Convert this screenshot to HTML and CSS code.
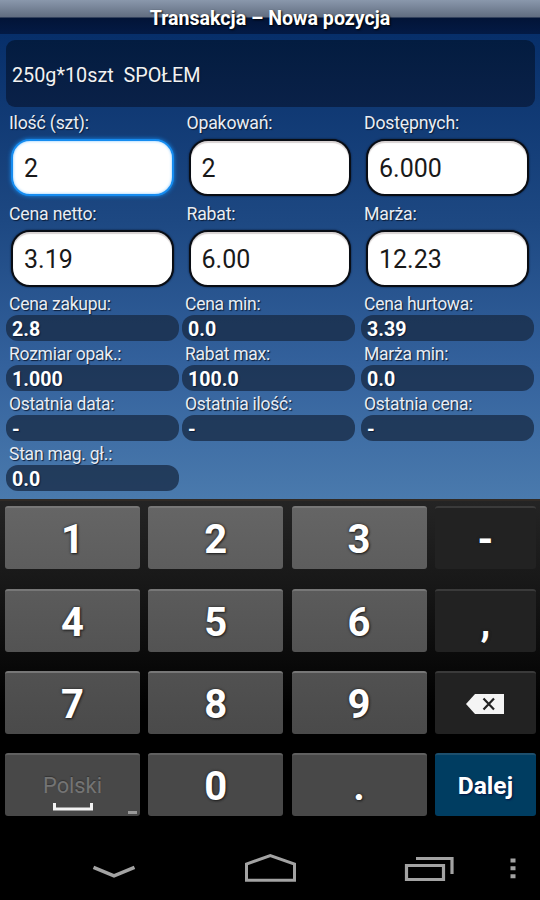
FILE: index.html
```html
<!DOCTYPE html>
<html lang="pl">
<head>
<meta charset="utf-8">
<title>Transakcja – Nowa pozycja</title>
<link rel="stylesheet" href="styles.css">
</head>
<body>
<main class="screen">
  <header class="title"><span>Transakcja – Nowa pozycja</span></header>
  <section class="form">
    <div class="product">250g*10szt&nbsp; SPOŁEM</div>
    <div class="inputs">
      <div class="field"><label>Ilość (szt):</label><div class="box focused">2</div></div>
      <div class="field"><label>Opakowań:</label><div class="box">2</div></div>
      <div class="field"><label>Dostępnych:</label><div class="box">6.000</div></div>
      <div class="field"><label>Cena netto:</label><div class="box">3.19</div></div>
      <div class="field"><label>Rabat:</label><div class="box">6.00</div></div>
      <div class="field"><label>Marża:</label><div class="box">12.23</div></div>
    </div>
    <div class="infos">
      <div class="info"><label>Cena zakupu:</label><div class="pill">2.8</div></div>
      <div class="info"><label>Cena min:</label><div class="pill">0.0</div></div>
      <div class="info"><label>Cena hurtowa:</label><div class="pill">3.39</div></div>
      <div class="info"><label>Rozmiar opak.:</label><div class="pill">1.000</div></div>
      <div class="info"><label>Rabat max:</label><div class="pill">100.0</div></div>
      <div class="info"><label>Marża min:</label><div class="pill">0.0</div></div>
      <div class="info"><label>Ostatnia data:</label><div class="pill">-</div></div>
      <div class="info"><label>Ostatnia ilość:</label><div class="pill">-</div></div>
      <div class="info"><label>Ostatnia cena:</label><div class="pill">-</div></div>
      <div class="info"><label>Stan mag. gł.:</label><div class="pill">0.0</div></div>
    </div>
  </section>
  <section class="keypad">
    <div class="key r1">1</div><div class="key r1">2</div><div class="key r1">3</div><div class="key dark">-</div>
    <div class="key r2">4</div><div class="key r2">5</div><div class="key r2">6</div><div class="key dark">,</div>
    <div class="key r3">7</div><div class="key r3">8</div><div class="key r3">9</div>
    <div class="key dark">
      <svg class="backspace" width="40" height="22" viewBox="0 0 40 22"><path d="M1 11 10 1H39V21H10Z" fill="#f4f4f4"/><path d="M18.5 5.5 29 16.5M29 5.5 18.5 16.5" stroke="#222" stroke-width="2.2"/></svg>
    </div>
    <div class="key r4 space"><span>Polski</span>
      <svg width="40" height="8" viewBox="0 0 40 8"><path d="M1.5 0V6H38.5V0" fill="none" stroke="#f2f2f2" stroke-width="3"/></svg>
      <i class="more"></i>
    </div>
    <div class="key r4">0</div><div class="key r4">.</div><div class="key enter">Dalej</div>
  </section>
  <nav class="navbar">
    <svg width="540" height="74" viewBox="0 826 540 74" fill="none" stroke="#a3a3a3">
      <path d="M93.5 867.3 114 875.8 134.500 867.3" stroke-width="3.6"/>
      <path d="M246.500 880.300V864L270.300 855.500 294.500 864V880.300Z" stroke-width="3"/>
      <path d="M406.500 865.500H443.500V879.500H406.500ZM416 858.500H452V874" stroke-width="3.200"/>
      <path d="M510.500 858.500h5v4h-5zM510.500 866.300h5v4h-5zM510.500 874.200h5v4h-5z" fill="#a3a3a3" stroke="none"/>
    </svg>
  </nav>
</main>
</body>
</html>
```
FILE: styles.css
```css
* { box-sizing: border-box; }
body { margin: 0; background: #000; font-family: Roboto, sans-serif; }
.screen { width: 540px; height: 900px; overflow: hidden; display: flex; flex-direction: column; }
.title {
  height: 34px; flex: none; text-align: center; color: #fff;
  font-weight: 700; font-size: 19.6px; line-height: 37px;
  text-shadow: 1px 1px 2px #000;
  background: linear-gradient(#8a98ac 0, #616d80 17px, #021437 18px, #031a45 34px);
}
.form {
  height: 465px; flex: none; padding: 6px 5px 0 6px;
  background: linear-gradient(#072f6a, #1d4882 40%, #34629d 72%, #4a7aad);
  color: #e9edf3; text-shadow: 1px 1px 1px #0a1c38;
}
.product {
  height: 67px; border-radius: 9px; padding-left: 6px;
  background: linear-gradient(#031c40, #0a2148);
  font-size: 19.8px; line-height: 71px; color: #f2f2f2;
}
.inputs { display: grid; grid-template-columns: 177.500px 177.500px 174px; grid-auto-rows: 91px; padding-top: 4px; }
.field label { display: block; height: 28px; padding-left: 3px; line-height: 24px; font-size: 17.7px; letter-spacing: -.2px; }
.box {
  width: 162.500px; height: 57px; margin-left: 5px; padding-left: 11px;
  border: 2px solid #090d14; border-radius: 19px; background: #fff; color: #191919;
  font-size: 25px; line-height: 55px; text-shadow: none;
  box-shadow: 0 0 2px #07142c, inset 0 2px 1px #d8d2d2;
}
.focused { border-color: #168cf0; box-shadow: 0 0 4px #168cf0, inset 0 0 3px #7cc4ff; }
.infos { display: grid; grid-template-columns: 176px 179px 174px; grid-auto-rows: 50px; margin-top: -1px; }
.info label { display: block; height: 23px; padding-left: 3px; line-height: 25px; font-size: 17.5px; letter-spacing: -.25px; }
.pill {
  width: 173px; height: 26px; border-radius: 12px; padding-left: 6px; background: rgba(24, 44, 70, .78);
  color: #fff; font-weight: 700; font-size: 19.6px; line-height: 29px;
}
.keypad {
  height: 327px; flex: none; padding: 5.300px 4px 0 5px; display: grid;
  grid-template-columns: 135px 135px 135px 101px; column-gap: 8.300px; grid-auto-rows: 63px; row-gap: 19.300px;
  border-top: 2px solid #302a25;
  background: linear-gradient(#242424, #181818 25%, #0c0c0c 45%, #000 65%);
}
.key {
  display: flex; align-items: center; justify-content: center; position: relative;
  border-radius: 3px; border-top: 2px solid #777; color: #fff; font-size: 40px; font-weight: 700;
  padding-top: 2px; text-shadow: 0 0 3px #222, 1px 1px 2px #222;
}
.r1 { background: linear-gradient(#656565, #5d5d5d); }
.r2 { background: linear-gradient(#5b5b5b, #535353); }
.r3 { background: linear-gradient(#515151, #4a4a4a); }
.r4 { background: #484848; border-top-color: #606060; }
.dark { background: #222; border-top-color: #3a3a3a; }
.enter { background: #003d61; border-top-color: #1d4f6d; font-size: 24.6px; padding-top: 0; text-shadow: 1px 1px 2px #001040; }
.space { flex-direction: column; color: #747474; font-weight: 400; font-size: 21.800px; line-height: 24px; padding-top: 13px; text-shadow: 0 -1px 1px #333; }
.space svg { margin-top: 5px; }
.more { position: absolute; right: 3px; bottom: 2px; width: 9px; height: 3px; background: #999; }
.navbar { height: 74px; flex: none; background: #000; }
```
